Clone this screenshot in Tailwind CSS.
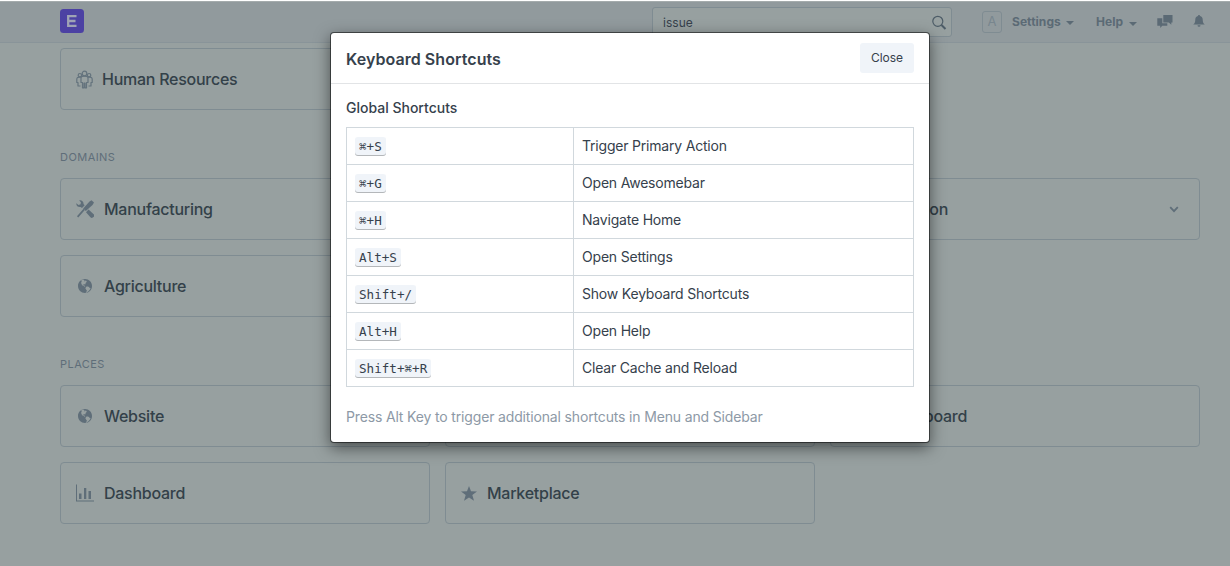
<!DOCTYPE html>
<html lang="en">
<head>
<meta charset="utf-8">
<title>Keyboard Shortcuts</title>
<script src="https://cdn.jsdelivr.net/npm/@tailwindcss/browser@4"></script>
</head>
<body class="h-[566px] w-[1230px] overflow-hidden bg-[#97a0a0] font-['Inter',sans-serif] text-[#36414c]">
<svg class="hidden">
  <symbol id="globe" viewBox="0 1 14 14">
    <path fill="#5f6e79" d="M7 1C3.140 1 0 4.140 0 8s3.140 7 7 7c.480 0 .940-.050 1.380-.140-.170-.080-.200-.730-.020-1.090.190-.410.810-1.450.200-1.800-.610-.350-.440-.500-.810-.910-.370-.410-.220-.470-.250-.580-.080-.340.360-.890.390-.940.020-.060.020-.270 0-.330 0-.080-.270-.220-.340-.230-.060 0-.110.110-.200.130-.090.020-.500-.250-.590-.330-.090-.080-.140-.230-.270-.340-.130-.130-.140-.030-.330-.110s-.800-.310-1.280-.480c-.480-.190-.520-.470-.520-.660-.020-.200-.300-.470-.420-.670-.140-.200-.160-.470-.200-.410-.040.060.250.780.200.810-.050.020-.160-.200-.300-.380-.140-.190.140-.090-.300-.950s.140-1.300.170-1.750c.030-.450.380.170.190-.130-.190-.300 0-.890-.140-1.110-.130-.220-.880.250-.880.250.020-.220.690-.580 1.160-.920.470-.340.780-.060 1.160.050.390.130.410.090.280-.050-.130-.130.060-.170.360-.130.280.050.380.410.830.360.470-.030.050.090.110.220s-.060.110-.380.300c-.300.200.020.220.550.610s.380-.250.310-.550c-.070-.300.390-.060.390-.060.330.220.270.020.500.080.230.060.910.640.910.640-.830.440-.310.480-.170.590.140.110-.280.300-.280.300-.170-.170-.190.020-.300.080-.110.060-.020.220-.020.220-.560.090-.440.690-.420.830 0 .140-.380.360-.470.580-.090.200.250.640.060.660-.190.030-.340-.660-1.310-.410-.300.080-.940.410-.590 1.080.360.690.920-.190 1.110-.090.190.100-.060.530-.020.550.040.020.530.020.560.610.030.590.770.530.920.550.170 0 .700-.440.770-.450.060-.030.380-.280 1.030.090.660.360.980.310 1.200.470.220.160.080.470.280.580.200.110 1.060-.030 1.280.310.220.340-.880 2.090-1.220 2.280-.340.190-.480.640-.840.920s-.810.640-1.270.910c-.410.230-.470.660-.660.800C11.660 14.140 14 11.340 14 8c0-3.860-3.140-7-7-7z"/>
  </symbol>
</svg>
<div class="h-px bg-white"></div>
<header class="flex h-[42px] items-start border-t border-b border-t-[#a4abac] border-b-[#899499] bg-[#919a9d] pl-[60px] text-[12px] font-bold tracking-[0.05px] text-[#5b6a75]">
  <svg class="mt-[7px] size-6" viewBox="0 0 24 24"><rect width="24" height="24" rx="3.500" fill="#4c41a3"/><path d="M16.500 7.200H8.200v9.600h8.300M8.200 12h7.300" fill="none" stroke="#9fa3b5" stroke-width="2.300"/></svg>
  <div class="mt-[5px] ml-[568px] flex h-[30px] w-[300px] items-center justify-between rounded-[3px] border border-[#7f8c92] bg-[#97a0a0] pr-[4px] pl-[10px] font-normal text-[#36414c]">
    <span class="pt-[2px]">issue</span>
    <svg class="size-4" viewBox="0 0 16 16" fill="none" stroke="#4d5c67"><circle cx="6.800" cy="7.300" r="5" stroke-width="1.200"/><path d="m10.500 11 4 4" stroke-width="2"/></svg>
  </div>
  <div class="mt-[9px] ml-[30px] flex h-[22px] w-5 items-center justify-center rounded-[3px] border border-[#7f8c92] text-[13px] font-normal text-[#78868e]">A</div>
  <div class="mt-[11px] ml-[10px] flex h-[18px] w-[84px] items-center"><span>Settings</span><svg class="mt-px ml-[5px] h-1 w-2" viewBox="0 0 8 4"><path d="M0 0h8L4 4Z" fill="#5b6a75"/></svg></div>
  <div class="mt-[11px] flex h-[18px] w-[61px] items-center"><span>Help</span><svg class="mt-[3px] ml-[6px] h-1 w-2" viewBox="0 0 8 4"><path d="M0 0h8L4 4Z" fill="#5b6a75"/></svg></div>
  <svg class="mt-[12px] h-[14px] w-4" viewBox="0 0 16 14" fill="#5b6a75"><path d="M6.300 1h9.200v7.500h-1.200v2.300L11.800 8.500H6.300Z"/><path d="M.3 4.200h5v5h5v2.500H5.300L3.200 13.900v-2.200H.3Z"/></svg>
  <svg class="mt-[13px] ml-[20px] h-3 w-3" viewBox="0 0 12 12" fill="#5b6a75"><path d="M6 0c.6 0 1 .4 1 1 1.800.4 2.700 1.700 2.700 3.500 0 2.800.7 4 2.100 5H.2c1.400-1 2.100-2.200 2.100-5C2.300 2.700 3.200 1.400 5 1c0-.6.4-1 1-1ZM4.500 10.200h3A1.500 1.500 0 0 1 4.500 10.200Z"/></svg>
</header>
<main class="px-[60px] pt-[5px] pr-[30px] text-[16px] font-medium tracking-[-0.26px] text-[#334149]">
  <div class="grid grid-cols-3 gap-[15px]">
    <div class="flex h-[62px] items-center rounded border border-[#7f8c92] pl-[15px]">
      <svg class="mr-[9px] h-[19px] w-[17px]" viewBox="0 0 17 18" fill="none" stroke="#64737d" stroke-width="1.200" stroke-linejoin="round"><circle cx="8.500" cy="3" r="2.300"/><circle cx="3.900" cy="4.700" r="1.700"/><circle cx="13.100" cy="4.700" r="1.700"/><path d="M5 7.200C5 6 6 5.700 8.500 5.700S12 6 12 7.200V12h-1.500v5.300H9V12.500H8v4.800H6.500V12H5ZM4.500 6.700C1.600 6.500.8 7.200.8 9v3H2v3.500h2.500M12.500 6.700c2.900-.2 3.700.5 3.700 2.300v3H15v3.500h-2.500"/></svg>
      <span>Human Resources</span>
    </div>
  </div>
  <h2 class="mt-[38px] mb-[12px] text-[11px] leading-[18px] font-normal tracking-[0.45px] text-[#5f6e79]">DOMAINS</h2>
  <div class="grid grid-cols-3 gap-[15px]">
    <div class="flex h-[62px] items-center rounded border border-[#7f8c92] pl-[15px]">
      <svg class="mr-[10px] size-[18px]" viewBox="0 0 18 18" fill="#5f6e79"><path d="M15.500.2 18 2.500 16.500 4.900 9.800 11 7.200 8.400 13.500 1.600Z"/><path d="M8.200 9.400 1.600 16.900" stroke="#5f6e79" stroke-width="1.700"/><path d="M12.500 9.500 17.400 14a2 2 0 0 1-3 3.200L10 12.200ZM3.200.4C5.500-.2 7.800 1.500 7.500 4L8.700 5.200 6 8 4.600 6.900C2.200 7.500 0 5.600.3 3.200L2.500 4.900 4.600 4.200 4.900 2.200Z"/></svg>
      <span>Manufacturing</span>
    </div>
    <div class="h-[62px] rounded border border-[#7f8c92]"></div>
    <div class="flex h-[62px] items-center rounded border border-[#7f8c92] pr-[20px] pl-[43px]"><span class="grow">Education</span>
      <svg class="h-[7px] w-[10px]" viewBox="0 0 10 7" fill="none" stroke="#5f6e79" stroke-width="1.800"><path d="m1.200 1.200 3.800 4 3.800-4"/></svg>
    </div>
    <div class="flex h-[62px] items-center rounded border border-[#7f8c92] pl-[17px]"><svg class="mr-[12px] size-[14px]"><use href="#globe"/></svg><span>Agriculture</span></div>
  </div>
  <h2 class="mt-[38px] mb-[12px] text-[11px] leading-[18px] font-normal tracking-[0.45px] text-[#5f6e79]">PLACES</h2>
  <div class="grid grid-cols-3 gap-[15px]">
    <div class="flex h-[62px] items-center rounded border border-[#7f8c92] pl-[17px]"><svg class="mr-[12px] size-[14px]"><use href="#globe"/></svg><span>Website</span></div>
    <div class="h-[62px] rounded border border-[#7f8c92]"></div>
    <div class="flex h-[62px] items-center rounded border border-[#7f8c92] pl-[41px]"><span>Leaderboard</span></div>
    <div class="flex h-[62px] items-center rounded border border-[#7f8c92] pl-[15px]">
      <svg class="mr-[10px] h-[18px] w-[18px]" viewBox="0 0 18 18" fill="#5f6e79"><path d="M0 .5h1v16h17v1H0ZM3 9.500h2.500V15H3ZM8 4H10.300v11H8ZM12.500 7h2.500v8h-2.500Z"/></svg>
      <span>Dashboard</span>
    </div>
    <div class="flex h-[62px] items-center rounded border border-[#7f8c92] pl-[15px]">
      <svg class="mr-[10px] h-[15px] w-[16px]" viewBox="0 0 16 15" fill="#5f6e79"><path d="m8 0 2 5.300 6 .1-4.700 3.600 1.700 5.700L8 11.400 3 14.700 4.700 9 0 5.400l6-.1Z"/></svg>
      <span>Marketplace</span>
    </div>
  </div>
</main>

<div class="absolute top-[32px] left-[330px] h-[411px] w-[600px] rounded-[4px] border border-black/50 bg-white bg-clip-padding text-[14px] shadow-[0_5px_15px_rgba(0,0,0,0.5)]">
  <div class="flex h-[51px] items-start justify-between border-b border-[#e2e4e6] px-[15px]">
    <h1 class="mt-[14px] text-[16px] leading-6 font-semibold tracking-[0.06px]">Keyboard Shortcuts</h1>
    <button class="mt-[10px] h-[30px] w-[54px] rounded-[3px] bg-[#f0f4f9] text-[12px]">Close</button>
  </div>
  <div class="px-[15px] pt-[14px]">
    <h2 class="leading-5 font-medium">Global Shortcuts</h2>
    <table class="mt-[9px] w-[568px] table-fixed border-collapse [&_td]:h-[37px] [&_td]:border [&_td]:border-[#d1d8dd] [&_td]:px-2 [&_td]:py-0 [&_td]:tracking-[-0.2px] [&_td+td]:pb-[2px] [&_kbd]:block [&_kbd]:h-[19px] [&_kbd]:w-fit [&_kbd]:rounded-[3px] [&_kbd]:bg-[#f0f4f9] [&_kbd]:px-1 [&_kbd]:font-['DejaVu_Sans_Mono',monospace] [&_kbd]:text-[12.6px] [&_kbd]:leading-[19px] [&_kbd]:tracking-normal [&_kbd]:shadow-[inset_0_-1px_0_rgba(0,0,0,0.25)]">
      <colgroup><col class="w-[227px]"><col></colgroup>
      <tbody>
      <tr><td><kbd>⌘+S</kbd></td><td>Trigger Primary Action</td></tr>
      <tr><td><kbd>⌘+G</kbd></td><td>Open Awesomebar</td></tr>
      <tr><td><kbd>⌘+H</kbd></td><td>Navigate Home</td></tr>
      <tr><td><kbd>Alt+S</kbd></td><td>Open Settings</td></tr>
      <tr><td><kbd>Shift+/</kbd></td><td>Show Keyboard Shortcuts</td></tr>
      <tr><td><kbd>Alt+H</kbd></td><td>Open Help</td></tr>
      <tr><td><kbd>Shift+⌘+R</kbd></td><td>Clear Cache and Reload</td></tr>
      </tbody>
    </table>
    <p class="mt-[20px] leading-5 tracking-[-0.155px] text-[#8d99a6]">Press Alt Key to trigger additional shortcuts in Menu and Sidebar</p>
  </div>
</div>
</body>
</html>
